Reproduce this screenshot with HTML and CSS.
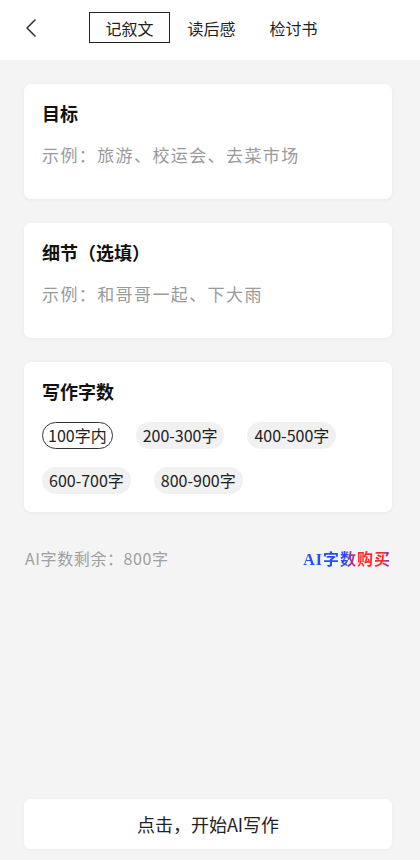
FILE: index.html
```html
<!DOCTYPE html>
<html lang="zh">
<head>
<meta charset="utf-8">
<link rel="stylesheet" href="styles.css">
</head>
<body>
<div class="page">
  <header class="topbar">
    <div class="back">
      <svg width="14" height="20" viewBox="0 0 14 20"><path d="M11 2 L3 10 L11 18" fill="none" stroke="#333" stroke-width="1.6" stroke-linecap="round" stroke-linejoin="round"/></svg>
    </div>
    <nav class="tabs">
      <span class="tab active">记叙文</span>
      <span class="tab">读后感</span>
      <span class="tab">检讨书</span>
    </nav>
  </header>

  <main class="content">
    <section class="card">
      <h2 class="card-title">目标</h2>
      <p class="placeholder">示例：旅游、校运会、去菜市场</p>
    </section>
    <section class="card">
      <h2 class="card-title">细节（选填）</h2>
      <p class="placeholder">示例：和哥哥一起、下大雨</p>
    </section>
    <section class="card">
      <h2 class="card-title">写作字数</h2>
      <div class="chips">
        <span class="chip selected">100字内</span>
        <span class="chip">200-300字</span>
        <span class="chip">400-500字</span>
        <span class="chip">600-700字</span>
        <span class="chip">800-900字</span>
      </div>
    </section>
    <div class="quota">
      <span class="remain">AI字数剩余：800字</span>
      <span class="buy">AI字数购买</span>
    </div>
  </main>

  <footer class="bottom">
    <button class="start">点击，开始AI写作</button>
  </footer>
</div>
</body>
</html>
```

FILE: styles.css
```css
* { box-sizing: border-box; }
html, body {
  margin: 0;
  padding: 0;
  background: #f4f4f4;
  font-family: "Noto Sans CJK SC", "Noto Sans", sans-serif;
  color: #222;
}
.page {
  width: 420px;
  height: 860px;
  display: flex;
  flex-direction: column;
}
.topbar {
  height: 60px;
  background: #fff;
  display: flex;
  align-items: flex-start;
  padding-top: 12px;
}
.back {
  width: 89px;
  padding-left: 24px;
  height: 31px;
  display: flex;
  align-items: center;
}
.back svg { display: block; }
.tabs {
  display: flex;
  gap: 1px;
}
.tab {
  width: 81px;
  height: 31px;
  display: flex;
  align-items: center;
  justify-content: center;
  font-size: 16px;
  color: #222;
  border: 1.5px solid transparent;
}
.tab.active {
  border-color: #222;
}
.content {
  flex: 1;
  padding: 24px 28px 0 24px;
  display: flex;
  flex-direction: column;
  gap: 24px;
}
.card {
  background: #fff;
  border-radius: 7px;
  box-shadow: 0 1px 4px rgba(0,0,0,0.05);
  padding: 17px 18px 18px;
}
.card-title {
  margin: 0;
  font-size: 18px;
  font-weight: 700;
  line-height: 24px;
  color: #111;
}
.placeholder {
  margin: 18px 0 14px;
  font-size: 17px;
  letter-spacing: 1.4px;
  line-height: 24px;
  color: #9a9a9a;
}
.chips {
  display: flex;
  flex-wrap: wrap;
  column-gap: 23px;
  row-gap: 18px;
  margin-top: 19px;
  width: 320px;
}
.chip {
  height: 27px;
  padding: 0 7px;
  border-radius: 14px;
  background: #f1f1f1;
  font-size: 16px;
  line-height: 27px;
  color: #222;
  display: inline-flex;
  align-items: center;
}
.chip.selected {
  background: #fff;
  border: 1.5px solid #333;
  padding: 0 5px;
}
.quota {
  display: flex;
  justify-content: space-between;
  align-items: center;
  margin-top: 10px;
  padding-left: 1px;
}
.remain {
  font-size: 16px;
  letter-spacing: 0.6px;
  color: #a0a0a0;
}
.buy {
  font-family: "Liberation Serif", "Noto Sans CJK SC", serif;
  font-weight: 700;
  font-size: 16px;
  letter-spacing: 1px;
  background: linear-gradient(90deg, #1f4dff 0%, #1f4dff 46%, #ff2a2a 62%, #ff2a2a 90%, #3050ff 100%);
  -webkit-background-clip: text;
  background-clip: text;
  color: transparent;
  margin-right: 1px;
}
.bottom {
  padding: 0 28px 11px 24px;
}
.start {
  width: 368px;
  height: 50px;
  border: none;
  border-radius: 7px;
  background: #fff;
  font-family: "Noto Sans CJK SC", sans-serif;
  font-size: 18px;
  color: #222;
  box-shadow: 0 1px 4px rgba(0,0,0,0.04);
}
```
